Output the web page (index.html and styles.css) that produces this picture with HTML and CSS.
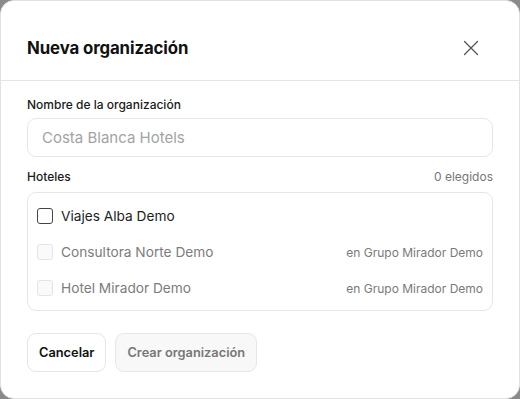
FILE: index.html
```html
<!DOCTYPE html>
<html lang="es">
<head>
    <meta charset="utf-8">
    <link rel="stylesheet" href="styles.css">
</head>
<body>
    <div class="dialog">
        <div class="dialog-header">
            <h2>Nueva organización</h2>
            <button class="close-btn" aria-label="Cerrar">
                <svg width="16" height="16" viewBox="0 0 16 16" fill="none" stroke="#555" stroke-width="1.3" stroke-linecap="round">
                    <path d="M1.5 1.5L14.5 14.5M14.5 1.5L1.5 14.5"/>
                </svg>
            </button>
        </div>
        <div class="dialog-body">
            <label class="field-label" for="orgName">Nombre de la organización</label>
            <input id="orgName" class="text-input" type="text" placeholder="Costa Blanca Hotels">

            <div class="list-head">
                <span class="field-label">Hoteles</span>
                <span class="count">0 elegidos</span>
            </div>
            <div class="hotel-list">
                <label class="hotel-row">
                    <span class="check"></span>
                    <span class="hotel-name">Viajes Alba Demo</span>
                </label>
                <label class="hotel-row disabled">
                    <span class="check"></span>
                    <span class="hotel-name">Consultora Norte Demo</span>
                    <span class="hotel-group">en Grupo Mirador Demo</span>
                </label>
                <label class="hotel-row disabled">
                    <span class="check"></span>
                    <span class="hotel-name">Hotel Mirador Demo</span>
                    <span class="hotel-group">en Grupo Mirador Demo</span>
                </label>
            </div>
        </div>
        <div class="dialog-footer">
            <button class="btn">Cancelar</button>
            <button class="btn btn-disabled">Crear organización</button>
        </div>
    </div>
</body>
</html>
```

FILE: styles.css
```css
* {
    box-sizing: border-box;
}

body {
    margin: 0;
    background: #8a8a8a;
    font-family: Inter, "Noto Sans", sans-serif;
    color: #111;
}

.dialog {
    width: 520px;
    height: 399px;
    background: #fff;
    border: 1px solid #e2e2e2;
    border-radius: 14px;
    overflow: hidden;
}

.dialog-header {
    display: flex;
    align-items: center;
    justify-content: space-between;
    height: 80px;
    padding: 14px 40px 0 26px;
    border-bottom: 1px solid #e5e5e5;
}

.dialog-header h2 {
    margin: 0;
    font-size: 16.8px;
    font-weight: 700;
    letter-spacing: -0.1px;
}

.close-btn {
    border: none;
    background: none;
    padding: 0;
    display: flex;
}

.dialog-body {
    padding: 16px 26px 0;
}

.field-label {
    display: block;
    font-size: 12px;
    font-weight: 500;
    color: #1a1a1a;
}

.text-input {
    display: block;
    width: 100%;
    height: 39px;
    margin-top: 6px;
    padding: 0 14px;
    border: 1px solid #e6e6e6;
    border-radius: 9px;
    font-family: inherit;
    font-size: 15px;
    color: #111;
}

.text-input::placeholder {
    color: #a3a3a3;
}

.list-head {
    display: flex;
    justify-content: space-between;
    align-items: center;
    margin-top: 12px;
}

.count {
    font-size: 12px;
    color: #777;
}

.hotel-list {
    margin-top: 8px;
    border: 1px solid #e6e6e6;
    border-radius: 9px;
    padding: 5px 9px 4px 9px;
}

.hotel-row {
    display: flex;
    align-items: center;
    height: 36px;
    font-size: 13.7px;
    color: #222;
}

.check {
    width: 16px;
    height: 16px;
    border: 1px solid #444;
    border-radius: 3px;
    margin-right: 8px;
}

.hotel-row.disabled {
    color: #7c7c7c;
}

.hotel-row.disabled .check {
    border-color: #e4e4e4;
    background: #fafafa;
}

.hotel-group {
    margin-left: auto;
    font-size: 12px;
    color: #7a7a7a;
}

.dialog-footer {
    display: flex;
    gap: 9px;
    padding: 22px 26px 0;
}

.btn {
    height: 39px;
    padding: 0 11px;
    border: 1px solid #e6e6e6;
    border-radius: 9px;
    background: #fff;
    font-family: inherit;
    font-size: 12.8px;
    font-weight: 600;
    color: #111;
}

.btn-disabled {
    background: #f8f8f8;
    color: #777;
}
```
